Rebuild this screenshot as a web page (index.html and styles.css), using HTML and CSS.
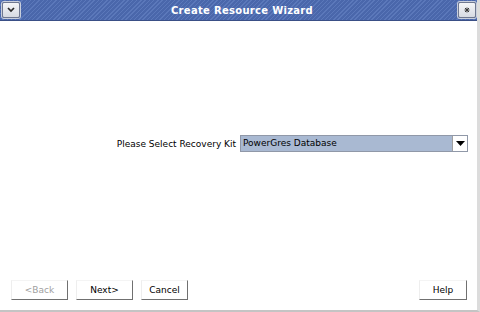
FILE: index.html
```html
<!DOCTYPE html>
<html>
<head>
<meta charset="utf-8">
<link rel="stylesheet" href="styles.css">
</head>
<body>
<div class="window">
  <div class="titlebar">
    <div class="tbtn">
      <svg width="10" height="8" viewBox="0 0 10 8"><path d="M2 2 L5 5 L8 2" fill="none" stroke="#2a2a2a" stroke-width="1.7"/></svg>
    </div>
    <div class="title">Create Resource Wizard</div>
    <div class="tbtn">
      <svg width="10" height="10" viewBox="0 0 10 10"><path d="M3 3 L7 7 M7 3 L3 7 M5 2.5 L5 7.5 M2.5 5 L7.5 5" fill="none" stroke="#3a3a3a" stroke-width="1"/></svg>
    </div>
  </div>
  <div class="content">
    <div class="form">
      <span class="label">Please Select Recovery Kit</span>
      <div class="combo">
        <span class="value">PowerGres Database</span>
        <span class="arrow"><svg width="9" height="5" viewBox="0 0 9 5"><path d="M0 0 H9 L4.5 5 Z" fill="#000"/></svg></span>
      </div>
    </div>
    <div class="buttons">
      <button class="btn disabled">&lt;Back</button>
      <button class="btn">Next&gt;</button>
      <button class="btn narrow">Cancel</button>
      <span class="spacer"></span>
      <button class="btn help">Help</button>
    </div>
  </div>
</div>
</body>
</html>
```
FILE: styles.css
```css
html, body {
  margin: 0;
  padding: 0;
  background: #ffffff;
}
.window {
  width: 480px;
  height: 312px;
  display: flex;
  flex-direction: column;
  box-sizing: border-box;
  border-right: 3px solid #dcdcdc;
  border-bottom: 2px solid #c4c4c4;
  font-family: "DejaVu Sans", sans-serif;
}
.titlebar {
  height: 21px;
  flex-shrink: 0;
  display: flex;
  align-items: center;
  padding: 0 1px 0 2px;
  background: repeating-linear-gradient(-45deg, #4a67ab 0px, #4a67ab 2px, #5b78ba 2px, #5b78ba 3px);
  border-bottom: 1px solid #3a4f86;
  box-sizing: border-box;
}
.tbtn {
  flex-shrink: 0;
  width: 18px;
  height: 16px;
  box-sizing: border-box;
  background: linear-gradient(#f4f5f8, #d6dae2);
  border: 1px solid #6f7890;
  box-shadow: 0 0 0 1px #c9cfdc;
  border-radius: 2px;
  display: flex;
  align-items: center;
  justify-content: center;
}
.title {
  flex: 1;
  text-align: center;
  color: #ffffff;
  font-weight: bold;
  font-size: 10px;
  letter-spacing: 0.3px;
  padding-left: 6px;
}
.content {
  flex: 1;
  display: flex;
  flex-direction: column;
}
.form {
  flex: 1;
  display: flex;
  align-items: center;
  justify-content: flex-end;
  padding-right: 9px;
  padding-bottom: 14px;
  gap: 4px;
  font-size: 9px;
}
.label {
  color: #000;
}
.combo {
  width: 228px;
  height: 17px;
  box-sizing: border-box;
  display: flex;
  background: #a9b9d2;
  border: 1px solid #9098a8;
}
.value {
  flex: 1;
  padding-left: 2px;
  line-height: 15px;
  color: #000;
}
.arrow {
  width: 14px;
  background: #ffffff;
  border-left: 1px solid #a0a0a0;
  display: flex;
  align-items: center;
  justify-content: center;
}
.buttons {
  display: flex;
  align-items: center;
  padding: 0 10px 10px 11px;
  gap: 8px;
}
.btn {
  font-family: "DejaVu Sans", sans-serif;
  font-size: 9px;
  width: 57px;
  height: 20px;
  background: #ffffff;
  border: none;
  border-right: 1px solid #707070;
  border-bottom: 1px solid #707070;
  border-left: 1px solid #eeeeee;
  border-top: 1px solid #f4f4f4;
  padding: 0;
  color: #000;
}
.btn.narrow {
  width: 47px;
}
.btn.help {
  width: 48px;
}
.btn.disabled {
  color: #a0a0a0;
}
.spacer {
  flex: 1;
}
```
